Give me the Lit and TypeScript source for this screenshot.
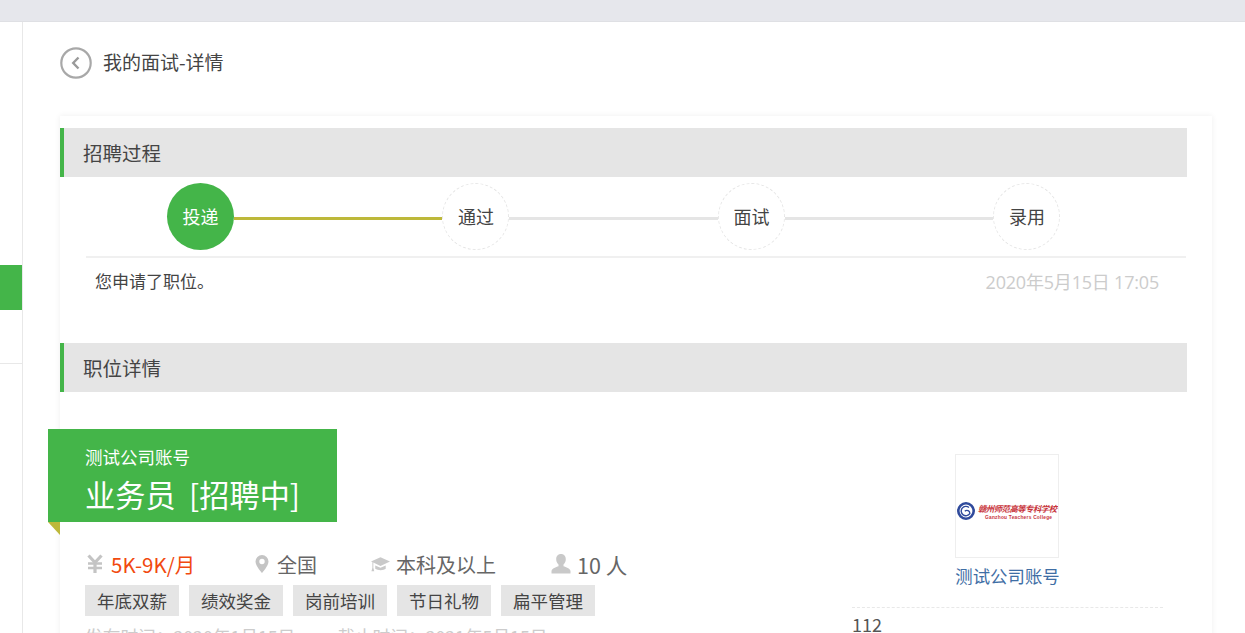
import { LitElement, html, css, svg } from "lit";
import { customElement } from "lit/decorators.js";

const steps = ["投递", "通过", "面试", "录用"];
const tags = ["年底双薪", "绩效奖金", "岗前培训", "节日礼物", "扁平管理"];

@customElement("app-root")
export class AppRoot extends LitElement {
  static styles = css`
    :host { display: block; width: 1245px; height: 633px; overflow: hidden; background: #fff; color: #444;
      font-family: "Noto Sans CJK SC", "Open Sans", sans-serif; }
    * { box-sizing: border-box; }
    .top { height: 22px; background: #e6e7ec; border-bottom: 1px solid #dfe0e4; }
    .body { display: flex; height: 611px; }
    .side { width: 23px; flex: none; border-right: 1px solid #e8e8e8; display: flex; flex-direction: column; }
    .side .active { height: 45px; margin-top: 243px; background: #44b549; }
    .side .rule { height: 1px; margin-top: 53px; background: #e8e8e8; }
    .main { flex: 1; padding-left: 37px; min-width: 0; }
    .head { display: flex; align-items: center; gap: 11px; height: 33px; margin-top: 24px; font-size: 19px; color: #444; }
    .head svg { display: block; }
    .head span { padding-bottom: 3px; }
    .card { width: 1152px; margin-top: 37px; padding-top: 12px; background: #fff; box-shadow: 0 0 6px rgba(0,0,0,.07); height: 600px; }
    .bar { width: 1127px; height: 49px; background: #e5e5e5; border-left: 4px solid #44b549; padding-left: 19px;
      font-size: 19.5px; line-height: 49px; color: #444; }
    .steps { display: flex; align-items: center; height: 79px; margin-left: 107px; width: 893.4px; }
    .step { width: 67px; height: 67px; flex: none; border-radius: 50%; border: 1px dashed #e6e6e6; display: flex;
      align-items: center; justify-content: center; padding-bottom: 2px; font-size: 18px; color: #444; }
    .step.on { background: #44b549; border: none; color: #fff; }
    .line { flex: 1; height: 3px; margin-top: 3px; background: #e5e5e5; }
    .line.on { background: #bdb83a; }
    .log { margin-left: 26px; width: 1100px; height: 51px; border-top: 2px solid #f0f0f0; display: flex;
      justify-content: space-between; align-items: center; padding: 0 27px 4px 9px; font-size: 17px; color: #444; }
    .log .date { font-size: 18px; color: #ccc; font-family: "Open Sans", "Noto Sans CJK SC", sans-serif; letter-spacing: -.2px; }
    .bar.two { margin-top: 36px; }
    .job { display: flex; }
    .left { width: 779px; flex: none; }
    .banner { position: relative; margin: 37px 0 0 -12px; width: 289px; height: 93px; background: #44b549; color: #fff;
      padding: 15px 0 0 37px; }
    .banner::after { content: ""; position: absolute; left: 0; top: 93px; border-style: solid; border-width: 13px 0 0 12px;
      border-color: #bdb83a transparent transparent transparent; }
    .co { font-size: 17.5px; line-height: 26px; }
    .title { font-size: 30.2px; line-height: 44px; margin-top: 2px; white-space: pre; }
    .info { display: flex; align-items: center; height: 30px; margin: 27px 0 0 25px; font-size: 20px; color: #666; }
    .item { display: flex; align-items: center; gap: 8px; flex: none; }
    .i-salary { width: 170px; gap: 6px; }
    .i-place { width: 115px; gap: 8px; }
    .i-edu { width: 181px; gap: 6px; }
    .i-num { gap: 6px; font-size: 21.5px; }
    .salary { color: #f1490f; font-size: 20.5px; }
    .tags { display: flex; gap: 10px; margin: 6px 0 0 25px; }
    .tag { height: 31px; width: 94px; background: #e5e5e5; font-size: 17.5px; line-height: 31px; text-align: center; color: #444; }
    .dates { margin: 8px 0 0 25px; display: flex; gap: 42px; font-size: 17.7px; color: #ccc; line-height: 24px; white-space: pre; }
    .right { width: 311px; margin-left: 13px; flex: none; display: flex; flex-direction: column; align-items: center; padding-top: 62px; }
    .logo { width: 104px; height: 104px; margin-right: 1px; border: 1px solid #eee; display: flex; align-items: center; justify-content: center; padding-top: 9px; }
    .coname { margin-top: 5px; font-size: 17.4px; line-height: 26px; color: #3f6ea5; }
    .dash { width: 100%; margin-top: 18px; border-top: 1px dashed #e8e8e8; }
    .desc { align-self: flex-start; margin-top: 4px; font-size: 18px; line-height: 24px; color: #555; }
    .ic { display: block; flex: none; }
  `;

  private logoMark() {
    return html`<svg class="ic" width="102" height="24" viewBox="0 0 102 24" aria-hidden="true">
      <circle cx="10" cy="12" r="7.700" fill="none" stroke="#2f4a9c" stroke-width="2.600"/>
      <path d="M13 8.500a4.700 4.700 0 1 0 .8 6.200 3 3 0 0 0-5-2.500" fill="none" stroke="#2f4a9c" stroke-width="1.400"/>
      ${svg`<text x="22" y="13" font-size="8.400" font-weight="700" font-style="italic" fill="#c8343c" font-family="Noto Sans CJK SC, serif" textLength="79">赣州师范高等专科学校</text>
      <text x="29" y="19.500" font-size="4.800" font-weight="700" fill="#c8343c" font-family="Liberation Sans, sans-serif" textLength="67">Ganzhou Teachers College</text>`}
    </svg>`;
  }

  render() {
    return html`
      <div class="top"></div>
      <div class="body">
        <div class="side"><div class="active"></div><div class="rule"></div></div>
        <div class="main">
          <div class="head">
            <svg width="32" height="32" viewBox="0 0 32 32" aria-hidden="true">
              <circle cx="16" cy="16" r="14.700" fill="none" stroke="#a8a8a8" stroke-width="2.200"/>
              <path d="M18.500 10.500l-5.300 5.500 5.300 5.500" fill="none" stroke="#9a9a9a" stroke-width="2.400"/>
            </svg>
            <span>我的面试-详情</span>
          </div>
          <div class="card">
            <div class="bar">招聘过程</div>
            <div class="steps">
              ${steps.map((s, i) => html`
                ${i > 0 ? html`<div class="line ${i === 1 ? "on" : ""}"></div>` : ""}
                <div class="step ${i === 0 ? "on" : ""}">${s}</div>`)}
            </div>
            <div class="log"><span>您申请了职位。</span><span class="date">2020年5月15日 17:05</span></div>
            <div class="bar two">职位详情</div>
            <div class="job">
              <div class="left">
                <div class="banner">
                  <div class="co">测试公司账号</div>
                  <div class="title">业务员  [招聘中]</div>
                </div>
                <div class="info">
                  <span class="item i-salary">
                    <svg class="ic" width="20" height="20" viewBox="0 0 20 20" aria-hidden="true"><path d="M3.500 1.500L10 8.500l6.500-7M10 8v11" fill="none" stroke="#c4c4c4" stroke-width="3.200"/><path d="M3 9.500h14M3 14h14" fill="none" stroke="#c4c4c4" stroke-width="2.400"/></svg>
                    <span class="salary">5K-9K/月</span>
                  </span>
                  <span class="item i-place">
                    <svg class="ic" width="14" height="20" viewBox="2 0 14 20" aria-hidden="true"><path fill-rule="evenodd" d="M9 1a6.500 6.500 0 0 1 6.500 6.500C15.500 12 9 19 9 19S2.500 12 2.500 7.500A6.500 6.500 0 0 1 9 1zm0 3.800a2.700 2.700 0 1 0 0 5.400 2.700 2.700 0 0 0 0-5.400z" fill="#c4c4c4"/></svg>
                    <span>全国</span>
                  </span>
                  <span class="item i-edu">
                    <svg class="ic" width="20" height="18" viewBox="0 0 21 18" aria-hidden="true"><path d="M11 2L21 6.500 11 11 3.500 7.500V13l1 3.500H1.500L2.500 13V7L1 6.500z" fill="#c9c9c9"/><path d="M5.500 10.500L11 13l5.500-2.500v3.500C14.500 16 8 16 5.500 14z" fill="#c9c9c9"/></svg>
                    <span>本科及以上</span>
                  </span>
                  <span class="item i-num">
                    <svg class="ic" width="20" height="20" viewBox="0 0 20 20" aria-hidden="true"><path d="M10 0c3 0 4.800 2.200 4.800 5.200 0 2.300-1 4.200-2.300 5.300v1.800c2.500 1 6.500 1.800 7 4.700v2.500H.5V17c.5-2.900 4.500-3.700 7-4.700v-1.800C6.200 9.400 5.200 7.500 5.200 5.200 5.200 2.200 7 0 10 0z" fill="#c9c9c9"/></svg>
                    <span>10 人</span>
                  </span>
                </div>
                <div class="tags">${tags.map((t) => html`<span class="tag">${t}</span>`)}</div>
                <div class="dates"><span>发布时间：2020年1月15日</span><span>截止时间：2021年5月15日</span></div>
              </div>
              <div class="right">
                <div class="logo">${this.logoMark()}</div>
                <div class="coname">测试公司账号</div>
                <div class="dash"></div>
                <div class="desc">112</div>
              </div>
            </div>
          </div>
        </div>
      </div>
    `;
  }
}
